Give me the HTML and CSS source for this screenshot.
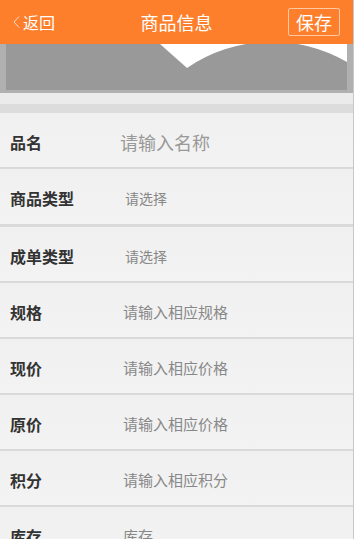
FILE: index.html
```html
<!DOCTYPE html>
<html>
<head>
  <meta charset="utf-8">
  <title>商品信息</title>
  <link rel="stylesheet" href="styles.css">
</head>
<body>
  <div class="page">
    <div class="header">
      <div class="back">
        <svg class="chev" width="7" height="12" viewBox="0 0 7 12">
          <polyline points="6,0.5 1,6 6,11.5" fill="none" stroke="#ffd9bf" stroke-width="1"/>
        </svg>
        返回
      </div>
      <div class="title">商品信息</div>
      <div class="right">
        <div class="save">保存</div>
      </div>
    </div>

    <div class="photo">
      <svg class="pic" width="341" height="46" viewBox="0 0 341 46">
        <rect width="341" height="46" fill="#999"/>
        <path d="M154 0 L181 24 A150 150 0 0 1 341 18 V0 Z" fill="#fff"/>
      </svg>
    </div>
    <div class="gap"></div>

    <div class="row">
      <div class="label">品名</div>
      <div class="input big">请输入名称</div>
    </div>
    <div class="row thick">
      <div class="label">商品类型</div>
      <div class="input small">请选择</div>
    </div>
    <div class="row">
      <div class="label">成单类型</div>
      <div class="input small">请选择</div>
    </div>
    <div class="row">
      <div class="label">规格</div>
      <div class="input">请输入相应规格</div>
    </div>
    <div class="row">
      <div class="label">现价</div>
      <div class="input">请输入相应价格</div>
    </div>
    <div class="row">
      <div class="label">原价</div>
      <div class="input">请输入相应价格</div>
    </div>
    <div class="row">
      <div class="label">积分</div>
      <div class="input">请输入相应积分</div>
    </div>
    <div class="row">
      <div class="label">库存</div>
      <div class="input">库存</div>
    </div>
  </div>
</body>
</html>
```

FILE: styles.css
```css
* {
  box-sizing: border-box;
  margin: 0;
  padding: 0;
}

body {
  font-family: "Noto Sans CJK SC", "Noto Sans", sans-serif;
  background-color: #fff;
  overflow: hidden;
}

.page {
  width: 354px;
  background-color: #efefef;
  border-right: 1px solid #c8c8c8;
}

/* top bar */
.header {
  height: 44px;
  background-color: #fd7f2c;
  display: flex;
  align-items: center;
  padding: 0 13px 0 13px;
  color: #fff;
}

.back,
.right {
  flex: 1 1 0;
  display: flex;
  align-items: center;
}

.back {
  font-size: 16px;
}

.chev {
  display: block;
  margin-right: 3px;
}

.title {
  font-size: 18px;
}

.right {
  justify-content: flex-end;
}

.save {
  width: 52px;
  height: 28px;
  border: 1px solid rgba(255, 220, 195, 0.8);
  border-radius: 2px;
  font-size: 18px;
  display: flex;
  justify-content: center;
  align-items: center;
}

/* picture */
.photo {
  height: 49px;
  background-color: #b0b0b0;
  padding: 0 6px 3px 6px;
}

.pic {
  display: block;
}

.gap {
  height: 20px;
  background: linear-gradient(#ebebeb 0, #ebebeb 11px, #dcdcdc 11px);
}

/* form rows */
.row {
  height: 56px;
  display: flex;
  align-items: center;
  padding: 3px 0 0 10px;
  border-bottom: 2px solid #d9d9d9;
  background: linear-gradient(#f0f0f0, #f3f3f3);
}

.row.thick {
  border-bottom-width: 3px;
  height: 58px;
}

.label {
  width: 110px;
  font-size: 16px;
  font-weight: bold;
  color: #333;
}

.input {
  font-size: 15px;
  color: #888;
  padding-left: 3px;
}

.input.big {
  font-size: 18px;
  color: #999;
  padding-left: 0;
}

.input.small {
  font-size: 14px;
  padding-left: 5px;
}
```
